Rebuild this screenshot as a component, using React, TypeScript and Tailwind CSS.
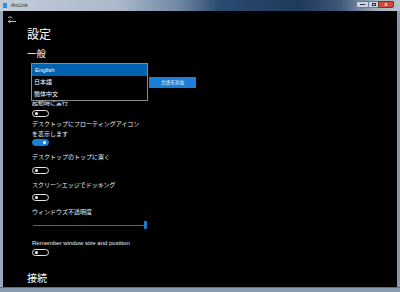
import React from "react";

function Toggle({ on = false }: { on?: boolean }) {
  return (
    <div
      className={
        on
          ? "flex h-[7px] w-[17px] items-center justify-end rounded-full border border-[#1a7fd6] bg-[#1a7fd6] px-[2px]"
          : "flex h-[7px] w-[17px] items-center justify-start rounded-full border border-[#e6e6e6] bg-black px-[2px]"
      }
    >
      <div className="h-[3px] w-[3px] rounded-full bg-white" />
    </div>
  );
}

export default function App() {
  const jp = "font-['Noto_Sans_CJK_JP','Noto_Sans',sans-serif]";
  return (
    <div className="flex h-[292px] w-[400px] flex-col overflow-hidden bg-[#8798ae]">
      {/* title bar */}
      <div className="flex h-[11px] w-full shrink-0 items-start justify-between bg-[linear-gradient(90deg,#c3ceda_0%,#aab8c9_30%,#6f86a3_45%,#2b4a70_55%,#1e3a5c_75%,#3d5878_85%,#a9b6c6_95%,#b7c3d1_100%)]">
        <div className="flex items-center pl-[3px] pt-[3px]">
          <div className="h-[5px] w-[4px] bg-[#2f8fe3]" />
          <span className="ml-[4px] font-['Liberation_Sans',sans-serif] text-[5px] leading-[5px] text-[#2a2a2a]">
            ArcLink
          </span>
        </div>
        <div className="mr-[6px] mt-[1px] flex h-[7px]">
          <div className="flex w-[13px] items-center justify-center rounded-bl-[2px] border border-[#6d7c90] bg-[#c9d2dd]">
            <div className="h-[1px] w-[5px] bg-[#333]" />
          </div>
          <div className="flex w-[9px] items-center justify-center border-y border-[#6d7c90] bg-[#c9d2dd]">
            <div className="h-[3px] w-[4px] border border-[#333]" />
          </div>
          <div className="flex w-[16px] items-center justify-center rounded-br-[2px] border border-[#6d3a34] bg-[#cf4a3c]">
            <span className="font-['Liberation_Sans',sans-serif] text-[5px] font-bold leading-[5px] text-white">
              x
            </span>
          </div>
        </div>
      </div>

      {/* body with frame */}
      <div className="flex min-h-0 flex-1">
        <div className="w-[3px] bg-[#9aa8bb]" />
        <div className={`flex min-w-0 flex-1 flex-col overflow-hidden bg-black text-white *:shrink-0 ${jp}`}>
          {/* back arrow */}
          <svg
            className="ml-[4px] mt-[5px]"
            width="10"
            height="7"
            viewBox="0 0 10 7"
            fill="none"
            stroke="#d0d0d0"
            strokeWidth="0.9"
          >
            <path d="M9 5.5 H1.5" />
            <path d="M3.5 3.3 L1.3 5.5 L3.5 7" />
            <path d="M1 1.5 C3 0.5 5 1 5.5 2.2" />
          </svg>

          <div className="ml-[24px] mt-[3px] text-[12px] leading-[15px]">設定</div>
          <div className="ml-[24px] mt-[6px] text-[9.5px] leading-[12px]">一般</div>

          {/* language section */}
          <div className="relative h-[40px] w-full">
            <div className="ml-[146px] mt-[18px] flex h-[11px] w-[47px] items-center justify-center bg-[#1a7fd6] text-[4.6px] leading-[5px] text-white">
              言語を追加
            </div>
            <div className="absolute left-[28px] top-[4px] flex w-[117px] flex-col border border-[#8a8a8a] bg-black text-[6px] leading-[12px]">
              <div className="h-[12px] bg-[#0063b1] pl-[3px] font-['Liberation_Sans',sans-serif] text-white">
                English
              </div>
              <div className="h-[12px] pl-[2px]">日本語</div>
              <div className="h-[12px] pl-[2px]">簡体中文</div>
            </div>
          </div>

          <div className="ml-[29px] text-[6px] leading-[8px] text-[#eeeeee]">起動時に実行</div>
          <div className="ml-[29px] mt-[3px]">
            <Toggle />
          </div>

          <div className="ml-[29px] mt-[2px] text-[6px] leading-[10px] text-[#eeeeee]">
            デスクトップにフローティングアイコン
            <br />
            を表示します
          </div>
          <div className="ml-[29px]">
            <Toggle on />
          </div>

          <div className="ml-[29px] mt-[7px] text-[6px] leading-[8px] text-[#eeeeee]">
            デスクトップのトップに置く
          </div>
          <div className="ml-[29px] mt-[6px]">
            <Toggle />
          </div>

          <div className="ml-[29px] mt-[7px] text-[6px] leading-[8px] text-[#eeeeee]">
            スクリーンエッジでドッキング
          </div>
          <div className="ml-[29px] mt-[5px]">
            <Toggle />
          </div>

          <div className="ml-[29px] mt-[7px] text-[6px] leading-[8px] text-[#eeeeee]">
            ウィンドウズ不透明度
          </div>
          <div className="ml-[30px] mt-[5px] flex h-[8px] w-[114px] items-center">
            <div className="h-[1px] flex-1 bg-[#2c6db3]" />
            <div className="h-[8px] w-[3px] rounded-[1px] bg-[#1a7fd6]" />
          </div>

          <div className="ml-[29px] mt-[10px] font-['Liberation_Sans',sans-serif] text-[6px] leading-[8px] text-[#eeeeee]">
            Remember window size and position
          </div>
          <div className="ml-[29px] mt-[2px]">
            <Toggle />
          </div>

          <div className="ml-[24px] mt-[15px] text-[10px] leading-[14px]">接続</div>
          <div className="ml-[24px] mt-[1px] text-[6px] leading-[8px] text-[#cccccc]">
            ローカルネットワーク
          </div>
        </div>
        <div className="w-[3px] bg-[#8798ae]" />
      </div>
      <div className="h-[5px] w-full shrink-0 border-t border-[#5a6d8a] bg-[#8a9ab0]" />
    </div>
  );
}
